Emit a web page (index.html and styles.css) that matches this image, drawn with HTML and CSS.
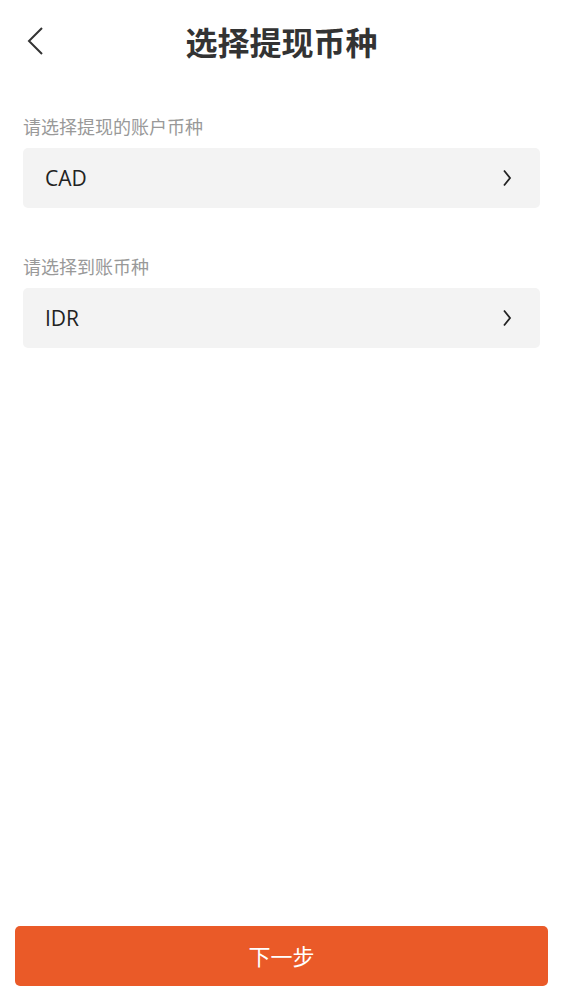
FILE: index.html
```html
<!DOCTYPE html>
<html lang="zh-CN">
<head>
<meta charset="utf-8">
<title>选择提现币种</title>
<link rel="stylesheet" href="styles.css">
</head>
<body>
<div class="page">
  <header class="nav">
    <span class="back">
      <svg width="20" height="30" viewBox="0 0 20 30"><path d="M15 2 L2 15 L15 28" fill="none" stroke="#333" stroke-width="2"/></svg>
    </span>
    <h1 class="title">选择提现币种</h1>
  </header>
  <main class="content">
    <div class="field">
      <div class="label">请选择提现的账户币种</div>
      <div class="select">
        <span class="value">CAD</span>
        <svg class="arrow" width="10" height="18" viewBox="0 0 10 18"><path d="M2 1.5 L8 9 L2 16.5" fill="none" stroke="#222" stroke-width="1.8"/></svg>
      </div>
    </div>
    <div class="field">
      <div class="label">请选择到账币种</div>
      <div class="select">
        <span class="value">IDR</span>
        <svg class="arrow" width="10" height="18" viewBox="0 0 10 18"><path d="M2 1.5 L8 9 L2 16.5" fill="none" stroke="#222" stroke-width="1.8"/></svg>
      </div>
    </div>
  </main>
  <footer class="footer">
    <button class="next">下一步</button>
  </footer>
</div>
</body>
</html>
```
FILE: styles.css
```css
* { box-sizing: border-box; }
html, body { margin: 0; padding: 0; background: #fff; }
body { font-family: "Open Sans", "Noto Sans CJK SC", sans-serif; }
.page { height: 990px; display: flex; flex-direction: column; }
.nav { position: relative; height: 86px; display: flex; align-items: center; justify-content: center; }
.back { position: absolute; left: 27px; top: 26px; width: 20px; height: 30px; display: block; }
.back svg { display: block; }
.title { margin: 0; font-family: "Noto Sans CJK SC", sans-serif; font-size: 32px; font-weight: 700; color: #333; line-height: 1; position: relative; top: -2px; }
.content { flex: 1; padding: 27px 23px 0; display: flex; flex-direction: column; gap: 45px; }
.field { display: flex; flex-direction: column; gap: 9px; }
.label { font-family: "Noto Sans CJK SC", sans-serif; font-size: 18px; color: #999; line-height: 26px; }
.select { height: 60px; background: #f3f3f3; border-radius: 5px; display: flex; align-items: center; justify-content: space-between; padding: 0 28px 0 22px; }
.value { font-size: 21px; color: #222; line-height: 1; }
.arrow { display: block; }
.footer { padding: 0 15px 4px; }
.next { width: 100%; height: 60px; border: none; border-radius: 5px; background: #ea5a28; color: #fff; font-family: "Noto Sans CJK SC", sans-serif; font-size: 22px; line-height: 1; padding: 0 0 3px; display: block; }
```
